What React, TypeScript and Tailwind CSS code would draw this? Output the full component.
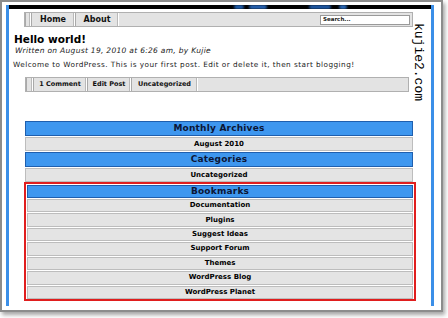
import React from "react";

const font = { fontFamily: '"DejaVu Sans", Verdana, sans-serif' };

function BarCell({ children, w }: { children?: React.ReactNode; w: string }) {
  return (
    <div
      className={`${w} h-full flex items-center justify-center border-l border-l-[#a9a9a9] border-r border-r-[#ffffff] shadow-[inset_-1px_0_0_#b9b9b9]`}
    >
      {children}
    </div>
  );
}

function Row({ label, h = "h-[14px]" }: { label: string; h?: string }) {
  return (
    <div
      className={`${h} flex items-center justify-center bg-[#e4e4e4] border border-[#bdbdbd] text-[7px] font-bold text-black leading-none`}
    >
      {label}
    </div>
  );
}

function Head({ label, h = "h-[15px]" }: { label: string; h?: string }) {
  return (
    <div
      className={`${h} flex items-center justify-center bg-[#3e97ef] border border-[#1f5fae] text-[9px] font-bold text-[#0c1636] leading-none tracking-[0.2px]`}
    >
      {label}
    </div>
  );
}

export default function App() {
  const bookmarks = [
    "Documentation",
    "Plugins",
    "Suggest Ideas",
    "Support Forum",
    "Themes",
    "WordPress Blog",
    "WordPress Planet",
  ];
  return (
    <div className="w-[448px] h-[318px] bg-white relative overflow-hidden" style={font}>
      <div className="w-[443px] h-[312px] border-2 border-[#8c8c8c] bg-white pt-[3px] pl-[4px] pr-[7px] shadow-[2px_3px_4px_rgba(0,0,0,0.35)]">
        <div className="h-[301px] border-x-[3px] border-x-[#3b8fe8] flex flex-col">
          {/* header strip */}
          <div className="h-[4px] bg-black relative overflow-hidden">
            <div className="absolute left-[225px] top-0 w-[10px] h-[4px] rounded-full bg-[#1f5fb0] blur-[1px]" />
            <div className="absolute left-[240px] top-0 w-[18px] h-[4px] rounded-full bg-[#2766b8] blur-[1px]" />
            <div className="absolute left-[300px] top-0 w-[22px] h-[4px] rounded-full bg-[#1d5aa8] blur-[1px]" />
            <div className="absolute left-[330px] top-0 w-[8px] h-[4px] rounded-full bg-[#2a6cc0] blur-[1px]" />
          </div>

          {/* nav bar */}
          <div className="mt-[3px] ml-[15px] w-[389px] h-[15px] bg-[#e3e3e3] border border-[#b0b0b0] flex items-center">
            <BarCell w="w-[6px]" />
            <BarCell w="w-[44px]">
              <span className="text-[8px] font-bold text-[#111] leading-none">Home</span>
            </BarCell>
            <BarCell w="w-[44px]">
              <span className="text-[8px] font-bold text-[#111] leading-none">About</span>
            </BarCell>
            <div className="flex-1" />
            <div className="w-[90px] h-[10px] mr-[2px] bg-white border border-[#9a9a9a] flex items-center pl-[2px]">
              <span className="text-[5.5px] font-bold text-[#222] leading-none">Search...</span>
            </div>
          </div>

          {/* post */}
          <div className="ml-[5px] mt-[6px] text-[10.5px] leading-[12px] font-bold text-black">Hello world!</div>
          <div className="ml-[6px] mt-[1px] text-[7.5px] leading-[9px] italic text-[#222] tracking-[0.3px]">
            Written on August 19, 2010 at 6:26 am, by Kujie
          </div>
          <div className="ml-[4px] mt-[5px] text-[7.3px] leading-[10px] text-[#222] tracking-[0.45px] whitespace-nowrap">
            Welcome to WordPress. This is your first post. Edit or delete it, then start blogging!
          </div>

          {/* meta bar */}
          <div className="mt-[7px] ml-[16px] w-[384px] h-[15px] bg-[#e3e3e3] border border-[#b0b0b0] flex items-center">
            <BarCell w="w-[7px]" />
            <BarCell w="w-[54px]">
              <span className="text-[6.5px] font-bold text-[#111] leading-none">1 Comment</span>
            </BarCell>
            <BarCell w="w-[44px]">
              <span className="text-[6.5px] font-bold text-[#111] leading-none">Edit Post</span>
            </BarCell>
            <BarCell w="w-[67px]">
              <span className="text-[6.5px] font-bold text-[#111] leading-none">Uncategorized</span>
            </BarCell>
          </div>

          {/* sidebar */}
          <div className="mt-[29px] ml-[16px] w-[388px] flex flex-col gap-px">
            <Head label="Monthly Archives" />
            <Row label="August 2010" />
            <Head label="Categories" />
            <Row label="Uncategorized" />
          </div>
          <div className="ml-[15px] w-[392px] h-[119px] border-2 border-[#e01e1e] px-px pt-px flex flex-col gap-px">
            <Head label="Bookmarks" h="h-[13px]" />
            {bookmarks.map((b) => (
              <Row key={b} label={b} h="h-[13.5px]" />
            ))}
          </div>
        </div>
      </div>

      {/* watermark */}
      <div
        className="absolute left-[412px] top-[23px] text-[13px] leading-[12px] text-black [writing-mode:vertical-rl]"
        style={{ fontFamily: '"Liberation Mono", monospace' }}
      >
        kujie2.com
      </div>
    </div>
  );
}
